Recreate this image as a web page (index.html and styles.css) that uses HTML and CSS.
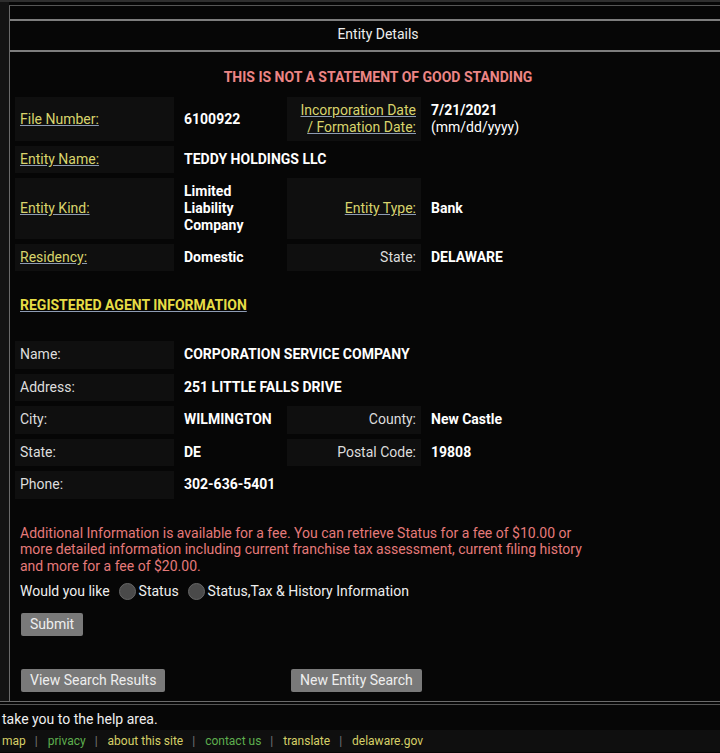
FILE: index.html
```html
<!DOCTYPE html>
<html lang="en">
<head>
    <meta charset="UTF-8">
    <meta name="viewport" content="width=device-width, initial-scale=1.0">
    <title>Entity Details</title>
    <link rel="stylesheet" href="styles.css">
</head>
<body>
    <div class="topbar"></div>
    <div class="page">
        <div class="side"></div>
        <div class="panel">
            <div class="panel-head">Entity Details</div>
            <div class="panel-body">
                <p class="warning">THIS IS NOT A STATEMENT OF GOOD STANDING</p>

                <!-- entity info -->
                <table class="details">
                    <colgroup>
                        <col class="col-lbl"><col class="col-val"><col class="col-lbl2"><col class="col-val2">
                    </colgroup>
                    <tr>
                        <td class="lbl"><a href="#">File Number:</a></td>
                        <td class="val">6100922</td>
                        <td class="lbl right"><a href="#">Incorporation Date / Formation Date:</a></td>
                        <td class="val">7/21/2021<br><span class="normal">(mm/dd/yyyy)</span></td>
                    </tr>
                    <tr>
                        <td class="lbl"><a href="#">Entity Name:</a></td>
                        <td class="val" colspan="3">TEDDY HOLDINGS LLC</td>
                    </tr>
                    <tr>
                        <td class="lbl"><a href="#">Entity Kind:</a></td>
                        <td class="val">Limited Liability Company</td>
                        <td class="lbl right"><a href="#">Entity Type:</a></td>
                        <td class="val">Bank</td>
                    </tr>
                    <tr>
                        <td class="lbl"><a href="#">Residency:</a></td>
                        <td class="val">Domestic</td>
                        <td class="lbl right">State:</td>
                        <td class="val">DELAWARE</td>
                    </tr>
                </table>

                <h2 class="agent-head"><a href="#">REGISTERED AGENT INFORMATION</a></h2>

                <!-- registered agent -->
                <table class="details agent">
                    <colgroup>
                        <col class="col-lbl"><col class="col-val"><col class="col-lbl2"><col class="col-val2">
                    </colgroup>
                    <tr>
                        <td class="lbl">Name:</td>
                        <td class="val" colspan="3">CORPORATION SERVICE COMPANY</td>
                    </tr>
                    <tr>
                        <td class="lbl">Address:</td>
                        <td class="val" colspan="3">251 LITTLE FALLS DRIVE</td>
                    </tr>
                    <tr>
                        <td class="lbl">City:</td>
                        <td class="val">WILMINGTON</td>
                        <td class="lbl right">County:</td>
                        <td class="val">New Castle</td>
                    </tr>
                    <tr>
                        <td class="lbl">State:</td>
                        <td class="val">DE</td>
                        <td class="lbl right">Postal Code:</td>
                        <td class="val">19808</td>
                    </tr>
                    <tr>
                        <td class="lbl">Phone:</td>
                        <td class="val" colspan="3">302-636-5401</td>
                    </tr>
                </table>

                <div class="fee">
                    <p class="fee-note">Additional Information is available for a fee. You can retrieve Status for a fee of $10.00 or more detailed information including current franchise tax assessment, current filing history and more for a fee of $20.00.</p>
                    <div class="fee-choice">
                        Would you like
                        <label><input type="radio" name="kind">Status</label>
                        <label><input type="radio" name="kind">Status,Tax &amp; History Information</label>
                    </div>
                    <button class="btn">Submit</button>
                </div>

                <div class="search-btns">
                    <div class="search-cell"><button class="btn">View Search Results</button></div>
                    <div class="search-cell"><button class="btn">New Entity Search</button></div>
                </div>
            </div>
        </div>
    </div>

    <div class="footer">
        <p class="help">take you to the help area.</p>
        <div class="footer-links">
            <a href="#" class="y">map</a><span class="sep">|</span>
            <a href="#" class="g">privacy</a><span class="sep">|</span>
            <a href="#" class="y">about this site</a><span class="sep">|</span>
            <a href="#" class="g">contact us</a><span class="sep">|</span>
            <a href="#" class="y">translate</a><span class="sep">|</span>
            <a href="#" class="y">delaware.gov</a>
        </div>
    </div>
</body>
</html>
```

FILE: styles.css
```css
body {
    margin: 0;
    background-color: #060606;
    color: #eeeeee;
    font-family: Roboto, 'Liberation Sans', sans-serif;
    font-size: 14px;
    line-height: 17px;
    overflow: hidden;
}

.topbar {
    height: 2px;
    background-color: #2e2e2e;
}

.page {
    display: flex;
    border-bottom: 1px solid #6a6a6a;
}

.side {
    width: 9px;
    flex-shrink: 0;
    background-color: #131313;
}

.panel {
    width: 736px;
    flex-shrink: 0;
    margin-top: 3px;
    border-left: 1px solid #6a6a6a;
    border-top: 1px solid #555;
}

.panel-head {
    margin-top: 13px;
    border-top: 2px solid #7d7d7d;
    border-bottom: 2px solid #7d7d7d;
    height: 29px;
    line-height: 27px;
    text-align: center;
}

.panel-body {
    padding-bottom: 9px;
}

.warning {
    margin: 17px 0 6px;
    text-align: center;
    font-weight: bold;
    color: #ec8585;
}

/* tables */
.details {
    border-spacing: 5px;
    table-layout: fixed;
    width: 736px;
}

.col-lbl { width: 159px; }
.col-val { width: 103px; }
.col-lbl2 { width: 134px; }

.details td {
    padding: 5px;
    vertical-align: middle;
}

.details td.lbl {
    background-color: #0f0f0f;
    color: #dddddd;
}

.details td.right {
    text-align: right;
}

.details td.val {
    font-weight: bold;
    color: #ffffff;
}

.details .normal {
    font-weight: normal;
}

.details a,
.agent-head a {
    color: #d9d46c;
    text-decoration-color: #8d9bb3;
}

.agent-head {
    margin: 21px 0 22px 10px;
    font-size: 14px;
    line-height: 17px;
}

.agent-head a {
    color: #e6dc45;
}

.agent td {
    line-height: 17.5px;
}

/* fee section */
.fee {
    padding: 0 10px;
    margin-top: 21px;
}

.fee-note {
    width: 575px;
    margin: 0;
    line-height: 16.5px;
    color: #e57a7a;
}

.fee-choice {
    margin-top: 5px;
    height: 24px;
    display: flex;
    align-items: center;
}

.fee-choice label {
    display: flex;
    align-items: center;
}

.fee-choice input {
    appearance: none;
    width: 17px;
    height: 17px;
    margin: 0 3px 0 9px;
    border-radius: 50%;
    background-color: #4a4a4a;
    border: 1px solid #666;
}

.btn {
    background-color: #797979;
    color: #eeeeee;
    border: none;
    border-radius: 2px;
    font-family: Roboto, 'Liberation Sans', sans-serif;
    font-size: 14px;
    line-height: 17px;
    height: 23px;
    padding: 0 9px;
    margin-left: 1px;
}

.fee .btn {
    margin-top: 10px;
}

.search-btns {
    display: flex;
    margin-top: 33px;
    padding-left: 10px;
}

.search-cell {
    width: 270px;
}

/* footer */
.footer {
    border-top: 1px solid #555;
    margin-top: 2px;
}

.help {
    margin: 0;
    padding: 6px 2px 2px;
}

.footer-links {
    background-color: #0f0f0f;
    padding: 2px 2px 1px;
    font-size: 12px;
    height: 19px;
    line-height: 18px;
}

.footer-links a {
    text-decoration: none;
}

.footer-links a.y { color: #d6cf68; }
.footer-links a.g { color: #5eae4e; }

.sep {
    color: #777;
    margin: 0 7px 0 9px;
}
```
